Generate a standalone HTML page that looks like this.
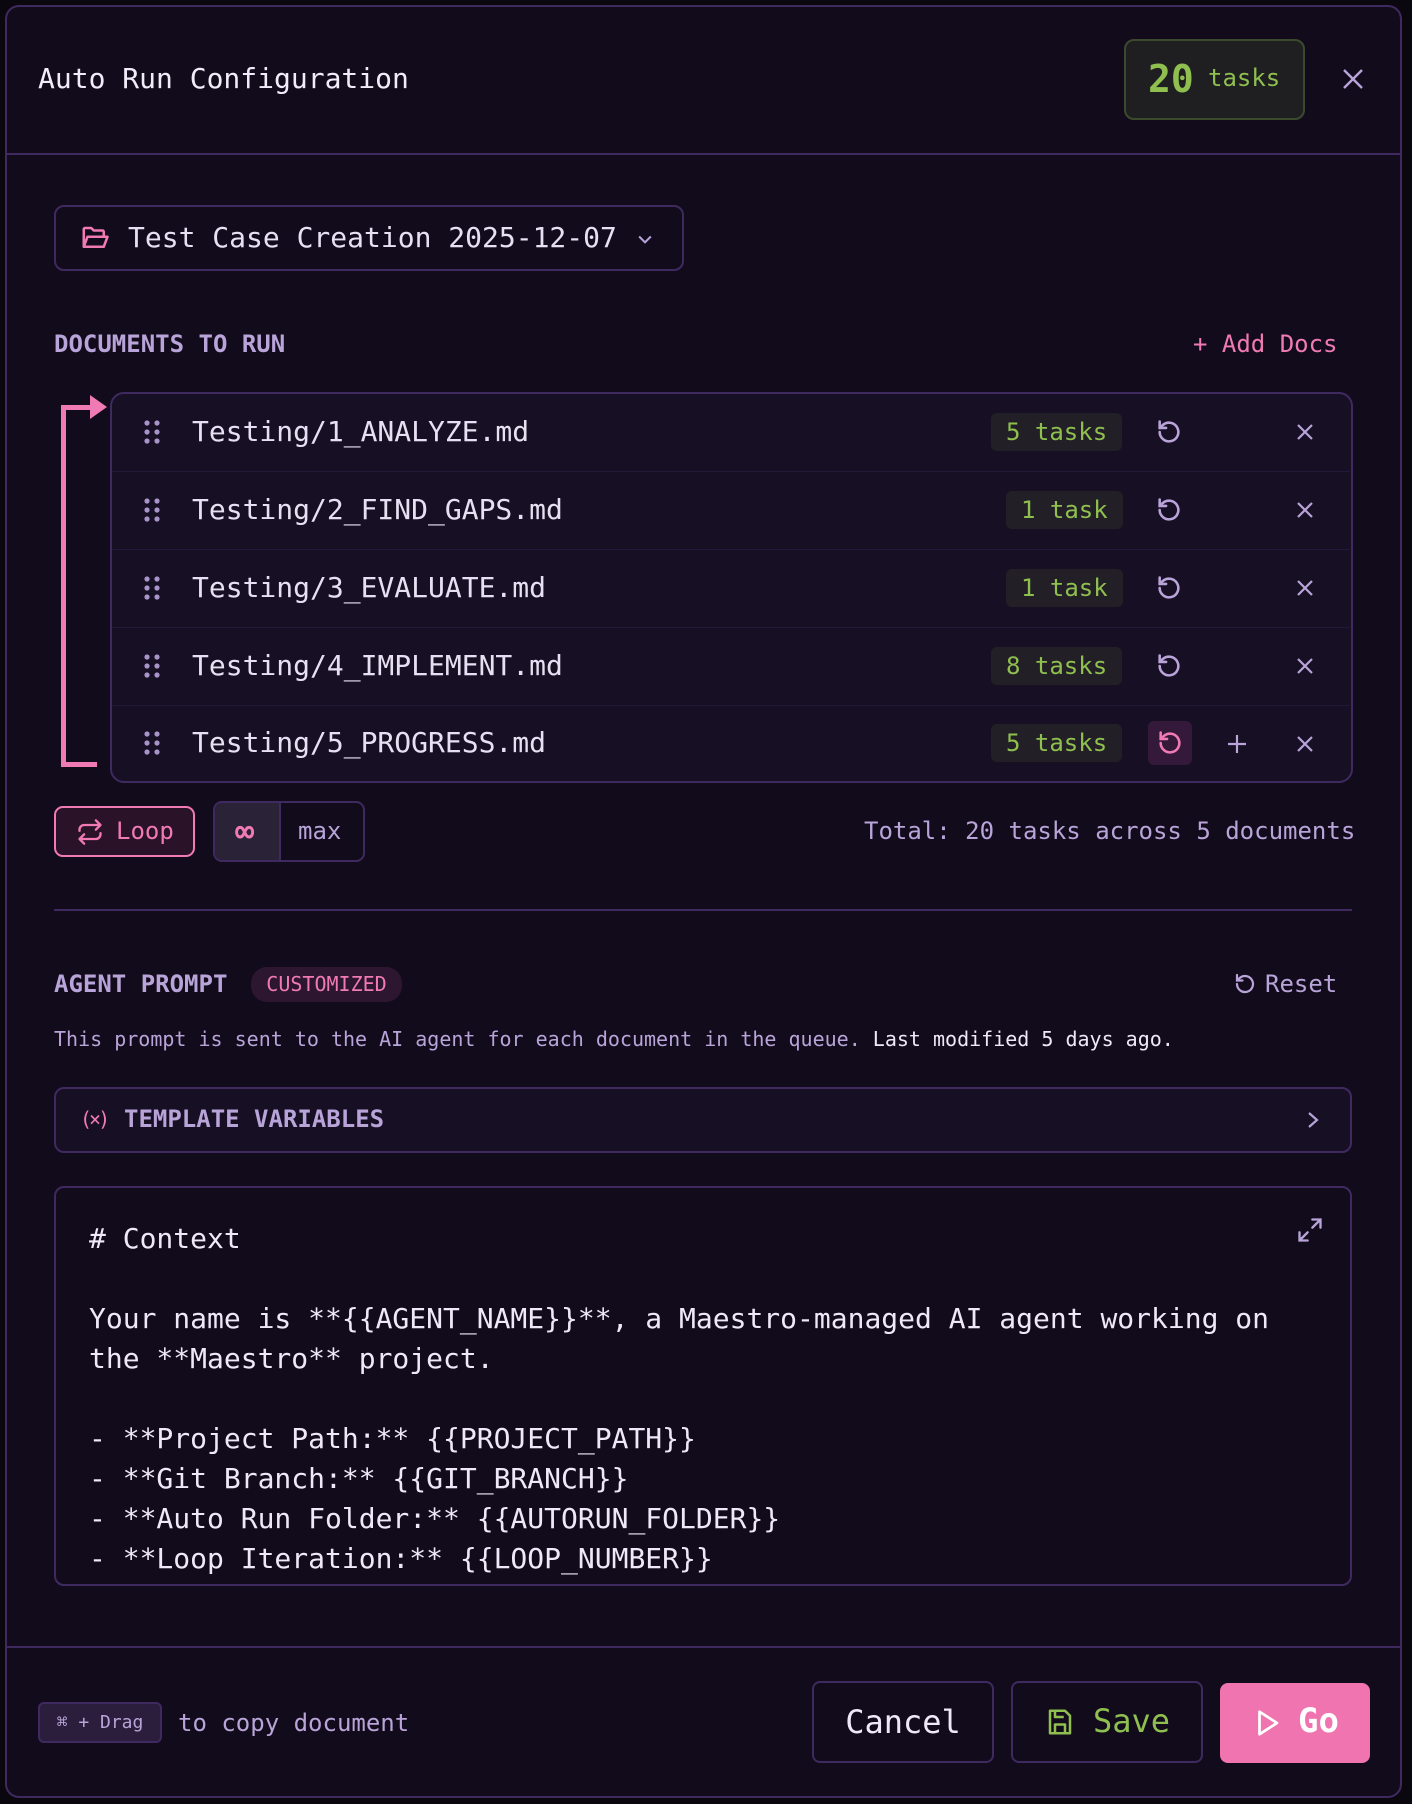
<!DOCTYPE html>
<html><head><meta charset="utf-8"><style>
*{margin:0;padding:0;box-sizing:border-box}
body{width:1412px;height:1804px;background:#0a070e;font-family:"DejaVu Sans Mono","Liberation Mono",monospace;color:#e8e0f2;position:relative;overflow:hidden}
.a{position:absolute}
.modal{left:5px;top:5px;width:1397px;height:1793px;background:#120b1c;border:2px solid #3f2a60;border-radius:14px}
.row{left:112px;width:1238px;height:78px;border-bottom:1px solid #22183a}
.badge{background:#222026;color:#8fbf4f;border-radius:6px;height:38px;font-size:24px;line-height:38px;padding:0 15px}
.ic{color:#b8a4d8}
</style></head><body>
<div class="a modal"></div>
<div class="a" style="left:38px;top:62px;font-size:28px;color:#f2ecf8">Auto Run Configuration</div>
<div class="a" style="left:1124px;top:39px;width:181px;height:81px;border:2px solid #3b4a2c;background:#1f1f22;border-radius:10px;"></div>
<div class="a" style="left:1148px;top:56px;color:#8fbf4f;font-size:38px;font-weight:bold;line-height:46px">20</div>
<div class="a" style="left:1208px;top:64px;color:#8fbf4f;font-size:24px">tasks</div>
<svg class="a" style="left:1341px;top:67px" width="24" height="24" viewBox="0 0 24 24"><path d="M3 3L21 21M21 3L3 21" stroke="#b8a4d8" stroke-width="2.4"/></svg>
<div class="a" style="left:6px;top:153px;width:1395px;height:2px;background:#3f2a60"></div>

<div class="a" style="left:54px;top:205px;width:630px;height:66px;border:2px solid #3f2a60;border-radius:10px"></div>
<svg class="a" style="left:80px;top:223px" width="30" height="30" viewBox="0 0 24 24" fill="none" stroke="#f07ab4" stroke-width="2" stroke-linejoin="round"><path d="M3 19V5a1 1 0 0 1 1-1h5l2 2h7a1 1 0 0 1 1 1v3M3 19l3-8h16l-3 8z"/></svg>
<div class="a" style="left:128px;top:221px;font-size:28px">Test Case Creation 2025-12-07</div>
<svg class="a" style="left:635px;top:229px" width="20" height="20" viewBox="0 0 24 24"><path d="M5 9l7 7 7-7" fill="none" stroke="#b8a4d8" stroke-width="2.4"/></svg>

<div class="a" style="left:54px;top:330px;font-size:24px;font-weight:bold;color:#b8a4d8">DOCUMENTS TO RUN</div>
<div class="a" style="left:1193px;top:330px;font-size:24px;color:#f07ab4">+ Add Docs</div>

<div class="a" style="left:110px;top:392px;width:1243px;height:391px;border:2px solid #3f2a60;border-radius:14px;background:#170f24"></div>
<div class="a" style="left:61px;top:405px;width:5px;height:362px;background:#f07ab4"></div>
<div class="a" style="left:61px;top:405px;width:40px;height:5px;background:#f07ab4"></div>
<div class="a" style="left:61px;top:762px;width:36px;height:5px;background:#f07ab4"></div>
<svg class="a" style="left:90px;top:395px" width="20" height="25"><path d="M0 0L17 12L0 24z" fill="#f07ab4"/></svg>

<div class="a row" style="top:394px"></div>
<div class="a row" style="top:472px"></div>
<div class="a row" style="top:550px"></div>
<div class="a row" style="top:628px"></div>

<svg class="a" width="0" height="0"><defs>
<g id="h"><circle cx="3" cy="3" r="2.6"/><circle cx="13" cy="3" r="2.6"/><circle cx="3" cy="12" r="2.6"/><circle cx="13" cy="12" r="2.6"/><circle cx="3" cy="21" r="2.6"/><circle cx="13" cy="21" r="2.6"/></g>
<g id="r" fill="none" stroke="currentColor" stroke-width="2.2" stroke-linecap="round"><path d="M4 12a8 8 0 1 0 2.5-5.8L4 8.5"/><path d="M4 3v5.5h5.5"/></g>
<g id="x"><path d="M3 3L17 17M17 3L3 17" stroke="#b8a4d8" stroke-width="2.2"/></g>
</defs></svg>

<svg class="a" style="left:144px;top:420px" width="16" height="24" fill="#a894c8"><use href="#h"/></svg>
<div class="a" style="left:192px;top:415px;font-size:28px">Testing/1_ANALYZE.md</div>
<div class="a badge" style="left:991px;top:413px">5 tasks</div>
<svg class="a ic" style="left:1155px;top:418px" width="28" height="28" viewBox="0 0 24 24"><use href="#r"/></svg>
<svg class="a" style="left:1295px;top:422px" width="20" height="20"><use href="#x"/></svg>

<svg class="a" style="left:144px;top:498px" width="16" height="24" fill="#a894c8"><use href="#h"/></svg>
<div class="a" style="left:192px;top:493px;font-size:28px">Testing/2_FIND_GAPS.md</div>
<div class="a badge" style="left:1006px;top:491px">1 task</div>
<svg class="a ic" style="left:1155px;top:496px" width="28" height="28" viewBox="0 0 24 24"><use href="#r"/></svg>
<svg class="a" style="left:1295px;top:500px" width="20" height="20"><use href="#x"/></svg>

<svg class="a" style="left:144px;top:576px" width="16" height="24" fill="#a894c8"><use href="#h"/></svg>
<div class="a" style="left:192px;top:571px;font-size:28px">Testing/3_EVALUATE.md</div>
<div class="a badge" style="left:1006px;top:569px">1 task</div>
<svg class="a ic" style="left:1155px;top:574px" width="28" height="28" viewBox="0 0 24 24"><use href="#r"/></svg>
<svg class="a" style="left:1295px;top:578px" width="20" height="20"><use href="#x"/></svg>

<svg class="a" style="left:144px;top:654px" width="16" height="24" fill="#a894c8"><use href="#h"/></svg>
<div class="a" style="left:192px;top:649px;font-size:28px">Testing/4_IMPLEMENT.md</div>
<div class="a badge" style="left:991px;top:647px">8 tasks</div>
<svg class="a ic" style="left:1155px;top:652px" width="28" height="28" viewBox="0 0 24 24"><use href="#r"/></svg>
<svg class="a" style="left:1295px;top:656px" width="20" height="20"><use href="#x"/></svg>

<svg class="a" style="left:144px;top:731px" width="16" height="24" fill="#a894c8"><use href="#h"/></svg>
<div class="a" style="left:192px;top:726px;font-size:28px">Testing/5_PROGRESS.md</div>
<div class="a badge" style="left:991px;top:724px">5 tasks</div>
<div class="a" style="left:1148px;top:721px;width:44px;height:44px;background:#34193a;border-radius:6px"></div>
<svg class="a" style="left:1156px;top:729px;color:#f07ab4" width="28" height="28" viewBox="0 0 24 24"><use href="#r"/></svg>
<svg class="a" style="left:1227px;top:734px" width="20" height="20"><path d="M10 1V19M1 10H19" stroke="#b8a4d8" stroke-width="2.2"/></svg>
<svg class="a" style="left:1295px;top:734px" width="20" height="20"><use href="#x"/></svg>

<div class="a" style="left:54px;top:806px;width:141px;height:51px;border:2px solid #f07ab4;border-radius:9px;background:#2a1228"></div>
<svg class="a" style="left:76px;top:818px" width="28" height="28" viewBox="0 0 24 24" fill="none" stroke="#f07ab4" stroke-width="2" stroke-linecap="round" stroke-linejoin="round"><path d="M17 2l4 4-4 4M3 11V10a4 4 0 0 1 4-4h14M7 22l-4-4 4-4M21 13v1a4 4 0 0 1-4 4H3"/></svg>
<div class="a" style="left:116px;top:817px;font-size:24px;color:#f07ab4">Loop</div>
<div class="a" style="left:213px;top:801px;width:152px;height:61px;border:2px solid #3f2a60;border-radius:9px;overflow:hidden"><div style="width:66px;height:100%;background:#2a2236;border-right:2px solid #3f2a60"></div></div>
<div class="a" style="left:235px;top:812px;font-size:32px;color:#f07ab4;font-weight:bold">∞</div>
<div class="a" style="left:298px;top:817px;font-size:24px;color:#b8a4d8">max</div>
<div class="a" style="left:864px;top:817px;font-size:24px;color:#b8a4d8">Total: 20 tasks across 5 documents</div>

<div class="a" style="left:54px;top:909px;width:1298px;height:2px;background:#3f2a60"></div>

<div class="a" style="left:54px;top:970px;font-size:24px;font-weight:bold;color:#b8a4d8">AGENT PROMPT</div>
<div class="a" style="left:251px;top:967px;width:151px;height:35px;background:#2c1630;border-radius:16px;color:#f07ab4;font-size:20px;line-height:35px;text-align:center">CUSTOMIZED</div>
<svg class="a" style="left:1233px;top:972px;color:#b8a4d8" width="24" height="24" viewBox="0 0 24 24"><use href="#r"/></svg>
<div class="a" style="left:1265px;top:970px;font-size:24px;color:#b8a4d8">Reset</div>
<div class="a" style="left:54px;top:1027px;font-size:20px;color:#b8a4d8">This prompt is sent to the AI agent for each document in the queue. <span style="color:#efe8f6">Last modified 5 days ago.</span></div>

<div class="a" style="left:54px;top:1087px;width:1298px;height:66px;border:2px solid #3f2a60;border-radius:10px;background:#170f24"></div>
<div class="a" style="left:80px;top:1107px;font-size:20px;color:#f07ab4;letter-spacing:-3px">(×)</div>
<div class="a" style="left:124px;top:1105px;font-size:24px;font-weight:bold;color:#b8a4d8">TEMPLATE VARIABLES</div>
<svg class="a" style="left:1305px;top:1110px" width="16" height="20"><path d="M4 3l8 7-8 7" fill="none" stroke="#b8a4d8" stroke-width="2.2"/></svg>

<div class="a" style="left:54px;top:1186px;width:1298px;height:400px;border:2px solid #3f2a60;border-radius:10px;background:#120b1c"></div>
<svg class="a" style="left:1296px;top:1216px" width="28" height="28" viewBox="0 0 24 24" fill="none" stroke="#b8a4d8" stroke-width="2" stroke-linecap="round"><path d="M14 3h7v7M21 3l-7 7M10 21H3v-7M3 21l7-7"/></svg>
<pre class="a" style="left:89px;top:1219px;font-size:28px;line-height:40px;color:#efe8f6;font-family:inherit"># Context

Your name is **{{AGENT_NAME}}**, a Maestro-managed AI agent working on
the **Maestro** project.

- **Project Path:** {{PROJECT_PATH}}
- **Git Branch:** {{GIT_BRANCH}}
- **Auto Run Folder:** {{AUTORUN_FOLDER}}
- **Loop Iteration:** {{LOOP_NUMBER}}</pre>

<div class="a" style="left:6px;top:1646px;width:1395px;height:2px;background:#3f2a60"></div>
<div class="a" style="left:38px;top:1702px;width:124px;height:41px;background:#2a1e3c;border:2px solid #3f2a60;border-radius:6px;color:#b8a4d8;font-size:18px;line-height:37px;text-align:center">⌘ + Drag</div>
<div class="a" style="left:178px;top:1709px;font-size:24px;color:#b8a4d8">to copy document</div>
<div class="a" style="left:812px;top:1681px;width:182px;height:82px;border:2px solid #3f2a60;border-radius:8px;font-size:32px;line-height:78px;text-align:center;color:#efe8f6">Cancel</div>
<div class="a" style="left:1011px;top:1681px;width:192px;height:82px;border:2px solid #3f2a60;border-radius:8px"></div>
<svg class="a" style="left:1045px;top:1707px" width="30" height="30" viewBox="0 0 24 24" fill="none" stroke="#8fbf4f" stroke-width="2" stroke-linejoin="round"><path d="M4 3h12l4 4v14H4zM8 21v-7h8v7M8 3v5h7"/></svg>
<div class="a" style="left:1093px;top:1702px;font-size:32px;color:#8fbf4f">Save</div>
<div class="a" style="left:1220px;top:1683px;width:150px;height:80px;background:#ef74b0;border-radius:8px"></div>
<svg class="a" style="left:1252px;top:1707px" width="30" height="32" viewBox="0 0 24 24" fill="none" stroke="#fff" stroke-width="2.2" stroke-linejoin="round"><path d="M6 3l14 9-14 9z"/></svg>
<div class="a" style="left:1298px;top:1701px;font-size:34px;font-weight:bold;color:#fff">Go</div>
</body></html>
